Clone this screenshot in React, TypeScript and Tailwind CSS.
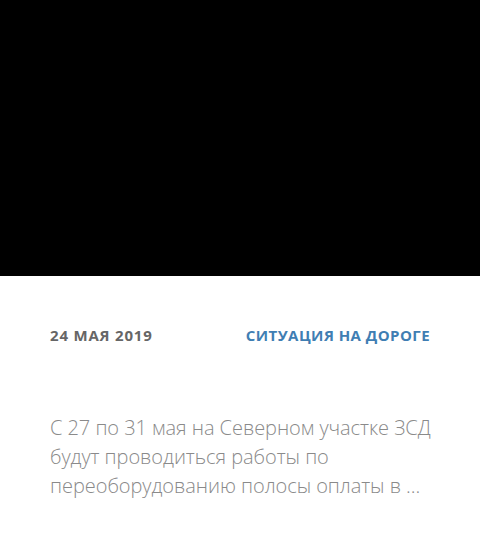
export default function App() {
  return (
    <div className="w-[480px] h-[551px] bg-white" style={{ fontFamily: '"Open Sans", sans-serif' }}>
      <div className="h-[276px] bg-black" />
      <div className="px-[50px] pt-[46px]">
        <div className="flex justify-between items-center text-[15px] font-bold uppercase leading-[26px]">
          <span className="text-[#666666] tracking-[0.8px]">24 мая 2019</span>
          <span className="text-[#3f7eb3] tracking-[0.45px]">Ситуация на дороге</span>
        </div>
        <p className="mt-[65px] w-[390px] text-[20px] leading-[29px] font-light text-[#8a8a8a] tracking-[-0.05px]">
          С 27 по 31 мая на Северном участке ЗСД будут проводиться работы по переоборудованию полосы оплаты в ...
        </p>
      </div>
    </div>
  );
}
